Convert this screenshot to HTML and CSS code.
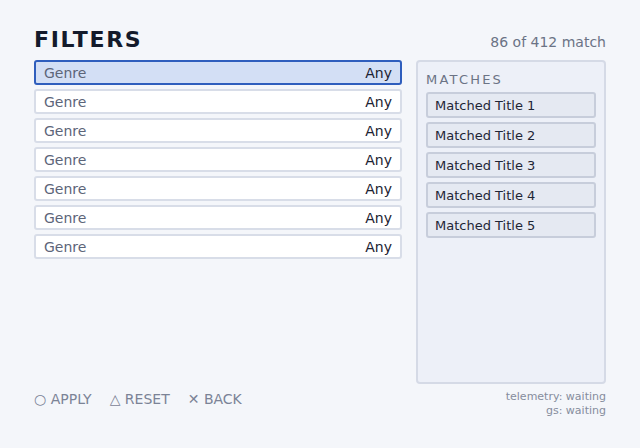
FILE: index.html
```html
<!DOCTYPE html>
<html>
<head>
<meta charset="utf-8">
<link rel="stylesheet" href="styles.css">
</head>
<body>
<div class="app">
  <header class="header">
    <h1 class="title">FILTERS</h1>
    <div class="count">86 of 412 match</div>
  </header>
  <main class="main">
    <ul class="filters">
      <li class="row selected"><span class="label">Genre</span><span class="value">Any</span></li>
      <li class="row"><span class="label">Genre</span><span class="value">Any</span></li>
      <li class="row"><span class="label">Genre</span><span class="value">Any</span></li>
      <li class="row"><span class="label">Genre</span><span class="value">Any</span></li>
      <li class="row"><span class="label">Genre</span><span class="value">Any</span></li>
      <li class="row"><span class="label">Genre</span><span class="value">Any</span></li>
      <li class="row"><span class="label">Genre</span><span class="value">Any</span></li>
    </ul>
    <section class="panel">
      <div class="panel-title">MATCHES</div>
      <ul class="matches">
        <li class="match">Matched Title 1</li>
        <li class="match">Matched Title 2</li>
        <li class="match">Matched Title 3</li>
        <li class="match">Matched Title 4</li>
        <li class="match">Matched Title 5</li>
      </ul>
    </section>
  </main>
  <footer class="footer">
    <div class="hints">
      <span class="hint">○ APPLY</span>
      <span class="hint">△ RESET</span>
      <span class="hint">✕ BACK</span>
    </div>
    <div class="status">
      <div>telemetry: waiting</div>
      <div>gs: waiting</div>
    </div>
  </footer>
</div>
</body>
</html>
```

FILE: styles.css
```css
* { box-sizing: border-box; }
html, body {
  margin: 0;
  padding: 0;
  background: #f4f6fa;
  font-family: "DejaVu Sans", "Liberation Sans", sans-serif;
}
.app {
  height: 448px;
  padding: 27px 34px 30px 34px;
  display: flex;
  flex-direction: column;
}
.header {
  display: flex;
  justify-content: space-between;
  align-items: baseline;
  height: 26px;
  margin-bottom: 7px;
}
.title {
  margin: 0;
  font-size: 22px;
  line-height: 26px;
  font-weight: bold;
  letter-spacing: 1.7px;
  color: #131a2b;
}
.count {
  font-size: 14px;
  color: #6b7385;
}
.main {
  flex: 1;
  display: flex;
  gap: 14px;
  margin-bottom: 4px;
}
.filters {
  list-style: none;
  margin: 0;
  padding: 0;
  width: 368px;
  display: flex;
  flex-direction: column;
  gap: 4px;
}
.row {
  height: 25px;
  display: flex;
  justify-content: space-between;
  align-items: center;
  padding: 0 8px;
  background: #ffffff;
  border: 2px solid #d8dde8;
  border-radius: 3px;
  font-size: 14px;
}
.row.selected {
  background: #d3dff5;
  border-color: #2f5ebd;
}
.label { color: #5c6579; }
.value { color: #1b2232; }
.panel {
  flex: 1;
  background: #edf0f8;
  border: 2px solid #d5dae6;
  border-radius: 4px;
  padding: 10px 8px 8px 8px;
}
.panel-title {
  font-size: 13px;
  line-height: 16px;
  letter-spacing: 2.2px;
  color: #6b7385;
  margin-bottom: 4px;
}
.matches {
  list-style: none;
  margin: 0;
  padding: 0;
  display: flex;
  flex-direction: column;
  gap: 4px;
}
.match {
  height: 26px;
  display: flex;
  align-items: center;
  padding: 0 7px;
  background: #e5e9f2;
  border: 2px solid #c7cddb;
  border-radius: 3px;
  font-size: 13px;
  color: #1f2636;
}
.footer {
  display: flex;
  justify-content: space-between;
  align-items: flex-start;
}
.hints {
  display: flex;
  gap: 18px;
  font-size: 14px;
  line-height: 22px;
  color: #7b8396;
}
.status {
  text-align: right;
  font-size: 11px;
  line-height: 14px;
  padding-top: 2px;
  color: #868d9d;
}
```
